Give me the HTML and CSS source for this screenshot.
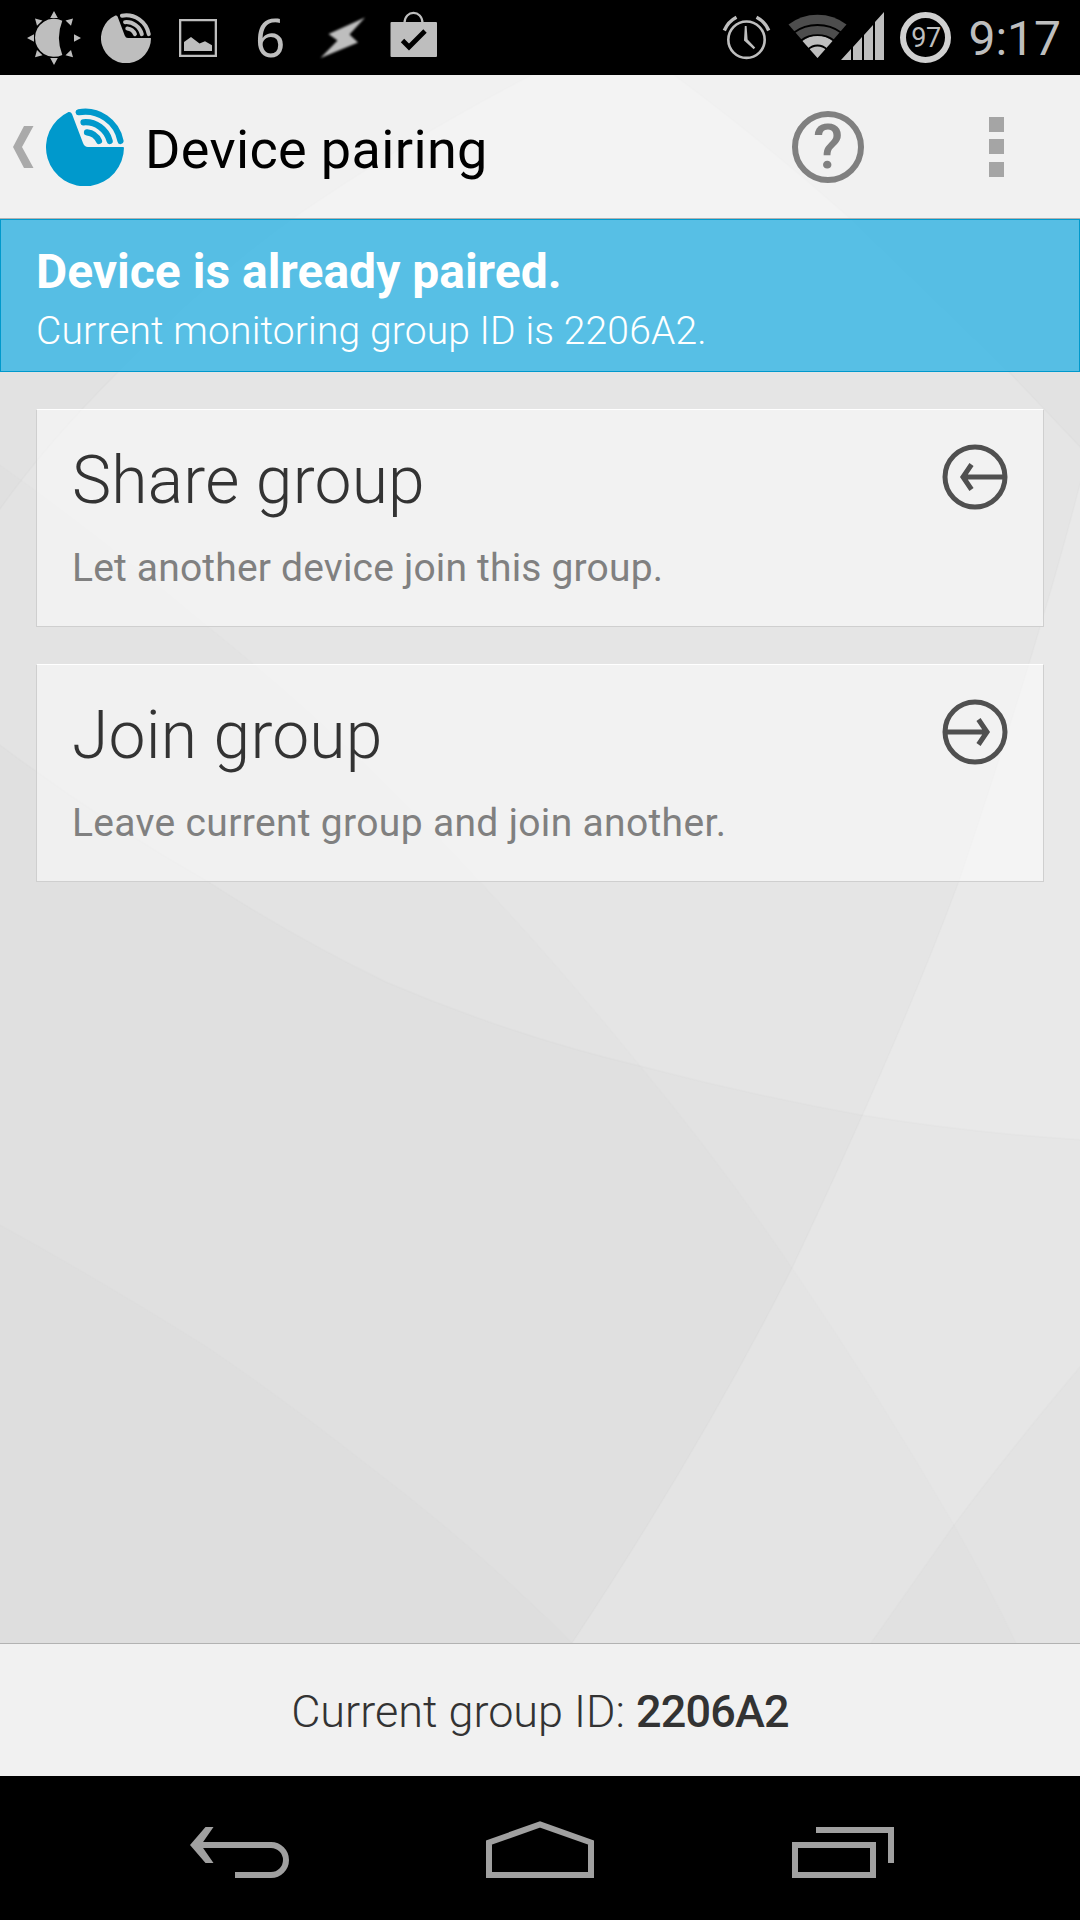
FILE: index.html
```html
<!DOCTYPE html>
<html lang="en">
<head>
<meta charset="utf-8">
<title>Device pairing</title>
<link rel="stylesheet" href="styles.css">
</head>
<body>
<svg class="symbols" aria-hidden="true">
  <symbol id="dish" viewBox="46 108 78 78">
    <path fill="currentColor" d="M124 147.500A39 39 0 1 1 68.500 112Q71 111.500 72 114L83 143Q84.500 147 88 147H123Z"/>
    <g fill="none" stroke="currentColor" stroke-width="6.200" stroke-linecap="round">
      <path d="M78.700 112.200A36 36 0 0 1 120.500 141"/>
      <path d="M83.500 122.300A25 25 0 0 1 109.700 141"/>
      <path d="M87 132.300A15 15 0 0 1 99 141"/>
    </g>
  </symbol>
</svg>
<div class="phone">
  <svg class="wallpaper" viewBox="0 0 1080 1920" aria-hidden="true">
    <path class="lighter" d="M-5 515L0 509Q45 445 118 372Q200 285 293 218Q420 130 580 50L640 50Q745 125 850 218L1009 372L1085 452V1930H-5Z"/>
    <path class="lighter strong" d="M1085 464L1080 484Q1040 640 959 881Q900 1040 792 1268Q700 1450 572 1643V1930H1085Z"/>
    <path class="darker" d="M-5 462L0 465Q100 536 207 626Q350 740 479 881Q560 967 640 1066Q720 1162 792 1268Q880 1397 954 1525Q990 1588 1016 1643V1930H-5Z"/>
    <path class="darker strong" d="M-5 741L0 745Q100 820 207 881Q295 938 386 982Q510 1035 640 1066Q750 1095 861 1115Q970 1133 1085 1140V1930H-5Z"/>
    <path class="darker" d="M-5 1222L0 1225Q100 1280 207 1347Q285 1400 365 1463Q480 1550 572 1643V1930H-5Z"/>
    <path class="darker strong" d="M1085 1361L1080 1367Q1010 1450 954 1525Q910 1588 871 1643V1930H1085Z"/>
  </svg>

  <div class="status-bar">
    <div class="status-group">
      <svg width="65" height="75" viewBox="25 0 65 75" fill="#bebebe">
        <path d="M62.300 20.700A19 19 0 1 0 62.300 54.900Q55.500 38 62.300 20.700Z"/>
        <path d="M54 11l3.800 7h-7.600zM54 65l3.800-7h-7.600zM27 38l7-3.800v7.600zM81 38l-7-3.800v7.600zM35 18.500l7.500 2-5.500 5.300zM35 57.200l7.500-2-5.500-5.300zM73 18.500l-7.500 2 5.500 5.300zM73 57.200l-7.500-2 5.500-5.300z"/>
      </svg>
      <svg class="status-dish" width="50" height="50"><use href="#dish"/></svg>
      <svg class="status-photo" width="38" height="38" viewBox="179 19 38 38" fill="#bebebe">
        <path fill-rule="evenodd" d="M179 19h38v38h-38zM181.300 21.300v33.400h33.400v-33.400z"/>
        <path d="M184 42l7-5 8.500 6.500 5.500-2.200 7 4V51h-28z"/>
      </svg>
      <span class="status-six">6</span>
      <svg width="50" height="75" viewBox="317 0 50 75"><path class="bolt" d="M365 17.500L328.500 34l9 6.500L320.500 58 358 42.500l-8.500-8z"/></svg>
      <svg class="status-bag" width="48" height="75" viewBox="390 0 48 75">
        <rect x="390.500" y="22" width="46.500" height="35" rx="1" fill="#bebebe"/>
        <path d="M404.500 23C404.500 9.500 422.500 9.500 422.500 23" fill="none" stroke="#bebebe" stroke-width="2.200"/>
        <path d="M402.500 40.500l6.500 6.500 16-16" fill="none" stroke="#000" stroke-width="4.800"/>
      </svg>
    </div>
    <div class="status-group">
      <svg width="50" height="75" viewBox="721 0 50 75" fill="none" stroke="#bebebe">
        <circle cx="746.500" cy="39.700" r="18.200" stroke-width="2.600"/>
        <path d="M724.300 30.500Q728 21.500 736.500 17.200M768.700 30.500Q765 21.500 756.500 17.200" stroke-width="3.400"/>
        <path d="M744.800 26h1.800l1 13.500 7.600 8-1.500 1.800-9.700-8.800z" fill="#bebebe" stroke="none"/>
      </svg>
      <svg class="status-wifi" width="60" height="75" viewBox="788 0 60 75">
        <path fill="#4d4d4d" d="M817.500 58L788.500 24.500Q801 14.700 817.500 14.700T846.500 24.500Z"/>
        <path fill="#bebebe" d="M817.500 58L802.500 41Q809 35.700 817.500 35.700T832.500 41Z"/>
        <g fill="none" stroke="#000" stroke-width="1.800"><path d="M794 32.500Q804 25 817.500 25T841 32.500M801 40.500Q808 35.200 817.500 35.200T834 40.500M808 49.500Q812 45.500 817.500 45.500T827 49.500"/></g>
      </svg>
      <svg class="status-signal" width="43" height="75" viewBox="841 0 43 75" fill="#bebebe"><path d="M841 60l10-11v11zM853 60V47l9-10v23zM864 60V35l9-10v35zM875 60V22l9-10v48z"/></svg>
      <span class="battery">97</span>
      <span class="clock">9:17</span>
    </div>
  </div>

  <header class="action-bar">
    <svg class="caret" width="21" height="42" viewBox="0 0 21 42"><path fill="#aaa" d="M0 21L11 0h9.500L9 21l11.500 21H11z"/></svg>
    <svg class="app-logo" width="78" height="78"><use href="#dish"/></svg>
    <h1 class="title">Device pairing</h1>
    <span class="help">?</span>
    <span class="overflow"><i></i><i></i><i></i></span>
  </header>

  <section class="banner">
    <h2 class="banner-title">Device is already paired.</h2>
    <p class="banner-text">Current monitoring group ID is 2206A2.</p>
  </section>

  <main class="cards">
    <article class="card">
      <div>
        <h3 class="card-title">Share group</h3>
        <p class="card-text">Let another device join this group.</p>
      </div>
      <svg class="card-icon" width="66" height="66" viewBox="942 444 66 66"><circle cx="975" cy="477" r="30"/><path d="M963 477H1005M971.500 464.500L963 477l8.500 12.500"/></svg>
    </article>
    <article class="card">
      <div>
        <h3 class="card-title">Join group</h3>
        <p class="card-text loose">Leave current group and join another.</p>
      </div>
      <svg class="card-icon" width="66" height="66" viewBox="942 444 66 66"><circle cx="975" cy="477" r="30"/><path d="M987 477H945M978.500 464.500L987 477l-8.500 12.500"/></svg>
    </article>
  </main>

  <footer class="group-id">Current group ID: <b>2206A2</b></footer>

  <nav class="nav-bar">
    <svg width="100" height="58" viewBox="190 1821 100 58"><path d="M199 1845H271A15 15 0 0 1 271 1875H235"/><path class="solid" d="M190 1845L205.500 1827H213.500L201 1845L213.500 1863H205.500Z"/></svg>
    <svg class="home" width="108" height="58" viewBox="486 1821 108 58"><path d="M489 1842.500L540 1824.500L591 1842.500V1875H489Z"/></svg>
    <svg width="102" height="58" viewBox="792 1821 102 58"><path d="M795 1845H873V1875H795ZM816 1830H891V1863"/></svg>
  </nav>
</div>
</body>
</html>
```
FILE: styles.css
```css
* { box-sizing: border-box; margin: 0; padding: 0; }
body { width: 1080px; height: 1920px; overflow: hidden; background: #000; font-family: Roboto, "Noto Sans", sans-serif; }
svg { display: block; flex: none; }
.symbols { position: absolute; width: 0; height: 0; }
.phone { position: relative; isolation: isolate; display: flex; flex-direction: column; width: 1080px; height: 1920px; background: #e2e2e2; }
.wallpaper { position: absolute; inset: 0; width: 1080px; height: 1920px; z-index: -1; }
.lighter { fill: rgba(255, 255, 255, .1); stroke: rgba(0, 0, 0, .012); stroke-width: 2; }
.lighter.strong { fill: rgba(255, 255, 255, .16); }
.darker { fill: rgba(0, 0, 0, .008); stroke: rgba(0, 0, 0, .008); stroke-width: 2; }
.darker.strong { fill: rgba(0, 0, 0, .012); stroke: rgba(0, 0, 0, .012); }

.status-bar { display: flex; justify-content: space-between; height: 75px; padding: 0 19px 0 25px; background: #000; color: #bebebe; }
.status-group { display: flex; align-items: flex-start; }
.status-dish { margin: 13px 0 0 11px; color: #bebebe; }
.status-photo { margin: 19px 0 0 28px; }
.status-six { width: 62px; margin: 0 0 0 38px; font: 400 53px/73px "Noto Sans", sans-serif; }
.bolt { fill: #bebebe; filter: blur(.8px); }
.status-bag { margin-left: 23px; }
.status-wifi { margin-left: 17px; }
.status-signal { margin-left: -7px; }
.battery { display: flex; align-items: center; justify-content: center; width: 51px; height: 51px; margin: 12px 0 0 16px; border: 6px solid #d0d0d0; border-radius: 50%; font-size: 27px; letter-spacing: -.5px; }
.clock { margin-left: 17px; font-size: 48px; line-height: 78px; }

.action-bar { display: flex; align-items: center; height: 144px; padding: 0 76px 0 13px; background: rgba(255, 255, 255, .52); border-bottom: 1px solid #b2b2b2; }
.app-logo { margin-left: 12px; color: #09c; }
.title { margin-left: 21px; padding-top: 5px; font-size: 54px; font-weight: 400; letter-spacing: .36px; color: #000; white-space: nowrap; }
.help { display: flex; align-items: center; justify-content: center; width: 72px; height: 72px; margin-left: auto; border: 6px solid #808080; border-radius: 50%; color: #808080; font-size: 62px; font-weight: 500; line-height: 60px; }
.overflow { display: flex; flex-direction: column; gap: 7.500px; margin-left: 125px; }
.overflow i { width: 15px; height: 15px; background: #a5a5a5; }

.banner { height: 153px; padding: 20px 35px 0; border: 1px solid #09c; background: rgba(51, 181, 229, .8); color: #fff; white-space: nowrap; }
.banner-title { font-size: 48px; line-height: 64px; font-weight: 700; }
.banner-text { font-size: 39px; line-height: 54px; font-weight: 300; letter-spacing: .13px; }

.cards { display: flex; flex-direction: column; gap: 37px; flex: 1; padding: 37px 36px 0; }
.card { display: flex; justify-content: space-between; align-items: flex-start; height: 218px; padding: 34px 35px 0; background: rgba(255, 255, 255, .5); border: 1px solid #cfcfcf; border-top-color: #fff; white-space: nowrap; }
.card-title { font-size: 66px; line-height: 74px; font-weight: 300; letter-spacing: .2px; color: #333; }
.card-text { padding-top: 24px; font-size: 39px; line-height: 52px; letter-spacing: .18px; color: #808080; }
.card-text.loose { letter-spacing: .33px; }
.card-icon { fill: none; stroke: #505050; stroke-width: 5; }

.group-id { height: 133px; border-top: 1px solid #b2b2b2; background: #f1f1f1; color: #333; font-size: 45px; font-weight: 300; line-height: 135px; text-align: center; }
.group-id b { font-weight: 500; letter-spacing: -.8px; }

.nav-bar { display: flex; justify-content: space-between; height: 144px; padding: 45px 186px 0 190px; background: #000; }
.nav-bar path { fill: none; stroke: #a0a0a0; stroke-width: 6; }
.nav-bar .home { margin: 0 1px 0 -1px; }
.nav-bar .solid { fill: #a0a0a0; stroke: none; }
```
